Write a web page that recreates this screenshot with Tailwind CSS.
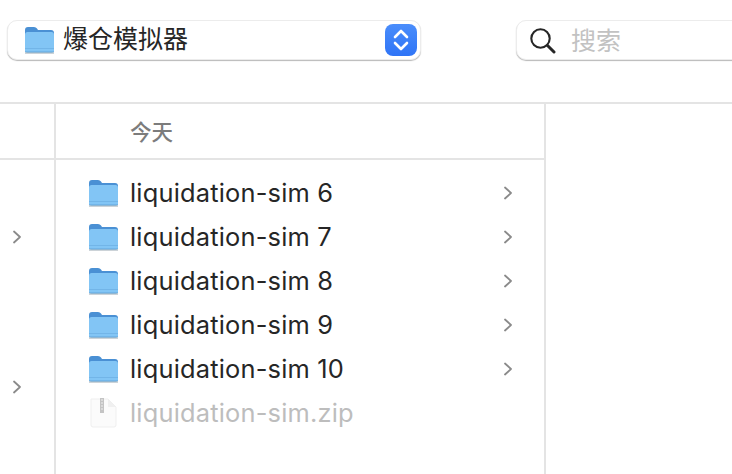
<!DOCTYPE html>
<html lang="zh">

<head>
  <meta charset="UTF-8" />
  <title>爆仓模拟器</title>
  <script src="https://cdn.jsdelivr.net/npm/@tailwindcss/browser@4"></script>
</head>

<body class="bg-white">
  <div class="w-[732px] h-[474px] overflow-hidden bg-white font-['Inter','Noto_Sans_CJK_SC',sans-serif]">
    <!-- Toolbar -->
    <div class="h-[102px] pt-[20px] pl-[7px] flex items-start">
      <div class="w-[414px] shrink-0 h-[40px] rounded-[10px] bg-white border border-[#ececec] shadow-[0_1px_1px_rgba(0,0,0,0.28)] flex items-center pl-[16px] pr-[3px]">
        <svg width="31" height="30" viewBox="0 0 31 30" class="shrink-0"><path d="M1 5 Q1 2 4 2 H10 Q12 2 13 3.5 L14 5 H27 Q30 5 30 8 V12 H1 Z" fill="#4a90d4" /><rect x="1" y="7" width="29" height="21" rx="2.5" fill="#82c5f5" /><rect x="1" y="23" width="29" height="1" fill="#72b5e8" /><rect x="1" y="26" width="29" height="1" fill="#72b5e8" /><rect x="1" y="27.5" width="29" height="1" fill="#9aa7b2" /></svg>
        <span class="ml-[8px] text-[25px] leading-none text-[#262626] -mt-[1px]">爆仓模拟器</span>
        <div class="ml-auto w-[32px] h-[32px] rounded-[8px] bg-gradient-to-b from-[#4a8dfb] to-[#2f74f6] flex items-center justify-center">
          <svg width="18" height="26" viewBox="0 0 18 26" fill="none" stroke="#fff" stroke-width="2.6" stroke-linecap="round" stroke-linejoin="round">
            <path d="M3 10 L9 4 L15 10" />
            <path d="M3 16 L9 22 L15 16" />
          </svg>
        </div>
      </div>
      <div class="ml-[95px] w-[300px] shrink-0 h-[40px] rounded-[10px] bg-white border border-[#ececec] shadow-[0_1px_1px_rgba(0,0,0,0.28)] flex items-center pl-[12px]">
        <svg width="27" height="27" viewBox="0 0 27 27" fill="none" stroke="#262626" class="shrink-0">
          <circle cx="11.5" cy="11.5" r="9.2" stroke-width="2.1" />
          <path d="M18.5 18.5 L25 25" stroke-width="3" stroke-linecap="round" />
        </svg>
        <span class="ml-[15px] pt-[2px] text-[25px] leading-none text-[#c2c2c2]">搜索</span>
      </div>
    </div>

    <!-- Columns -->
    <div class="flex h-[372px] border-t-2 border-[#e4e4e4]">
      <div class="w-[56px] shrink-0 border-r-2 border-[#e4e4e4] relative">
        <div class="h-[56px] border-b-2 border-[#e4e4e4]"></div>
        <svg width="10" height="14" viewBox="0 0 10 14" fill="none" stroke="#8a8a8a" stroke-width="1.8" stroke-linecap="round" stroke-linejoin="round" class="absolute left-[12px] top-[126px]"><path d="M2 1.5 L8 7 L2 12.5" /></svg>
        <svg width="10" height="14" viewBox="0 0 10 14" fill="none" stroke="#8a8a8a" stroke-width="1.8" stroke-linecap="round" stroke-linejoin="round" class="absolute left-[12px] top-[276px]"><path d="M2 1.5 L8 7 L2 12.5" /></svg>
      </div>
      <div class="w-[490px] shrink-0 border-r-2 border-[#e4e4e4]">
        <div class="h-[56px] border-b-2 border-[#e4e4e4] flex items-center pl-[74px] pt-[3px] text-[21.5px] text-[#7c7c7c] font-medium">今天</div>
        <ul class="pt-[11px] text-[25.4px] tracking-[0.2px] leading-[44px] text-[#262626]">
          <li class="h-[44px] flex items-center pl-[32px] pr-[31px]">
            <svg width="31" height="30" viewBox="0 0 31 30" class="shrink-0"><path d="M1 5 Q1 2 4 2 H10 Q12 2 13 3.5 L14 5 H27 Q30 5 30 8 V12 H1 Z" fill="#4a90d4" /><rect x="1" y="7" width="29" height="21" rx="2.5" fill="#82c5f5" /><rect x="1" y="23" width="29" height="1" fill="#72b5e8" /><rect x="1" y="26" width="29" height="1" fill="#72b5e8" /><rect x="1" y="27.5" width="29" height="1" fill="#9aa7b2" /></svg>
            <span class="ml-[11px]">liquidation-sim 6</span>
            <svg width="10" height="14" viewBox="0 0 10 14" fill="none" stroke="#8a8a8a" stroke-width="1.8" stroke-linecap="round" stroke-linejoin="round" class="ml-auto"><path d="M2 1.5 L8 7 L2 12.5" /></svg>
          </li>
          <li class="h-[44px] flex items-center pl-[32px] pr-[31px]">
            <svg width="31" height="30" viewBox="0 0 31 30" class="shrink-0"><path d="M1 5 Q1 2 4 2 H10 Q12 2 13 3.5 L14 5 H27 Q30 5 30 8 V12 H1 Z" fill="#4a90d4" /><rect x="1" y="7" width="29" height="21" rx="2.5" fill="#82c5f5" /><rect x="1" y="23" width="29" height="1" fill="#72b5e8" /><rect x="1" y="26" width="29" height="1" fill="#72b5e8" /><rect x="1" y="27.5" width="29" height="1" fill="#9aa7b2" /></svg>
            <span class="ml-[11px]">liquidation-sim 7</span>
            <svg width="10" height="14" viewBox="0 0 10 14" fill="none" stroke="#8a8a8a" stroke-width="1.8" stroke-linecap="round" stroke-linejoin="round" class="ml-auto"><path d="M2 1.5 L8 7 L2 12.5" /></svg>
          </li>
          <li class="h-[44px] flex items-center pl-[32px] pr-[31px]">
            <svg width="31" height="30" viewBox="0 0 31 30" class="shrink-0"><path d="M1 5 Q1 2 4 2 H10 Q12 2 13 3.5 L14 5 H27 Q30 5 30 8 V12 H1 Z" fill="#4a90d4" /><rect x="1" y="7" width="29" height="21" rx="2.5" fill="#82c5f5" /><rect x="1" y="23" width="29" height="1" fill="#72b5e8" /><rect x="1" y="26" width="29" height="1" fill="#72b5e8" /><rect x="1" y="27.5" width="29" height="1" fill="#9aa7b2" /></svg>
            <span class="ml-[11px]">liquidation-sim 8</span>
            <svg width="10" height="14" viewBox="0 0 10 14" fill="none" stroke="#8a8a8a" stroke-width="1.8" stroke-linecap="round" stroke-linejoin="round" class="ml-auto"><path d="M2 1.5 L8 7 L2 12.5" /></svg>
          </li>
          <li class="h-[44px] flex items-center pl-[32px] pr-[31px]">
            <svg width="31" height="30" viewBox="0 0 31 30" class="shrink-0"><path d="M1 5 Q1 2 4 2 H10 Q12 2 13 3.5 L14 5 H27 Q30 5 30 8 V12 H1 Z" fill="#4a90d4" /><rect x="1" y="7" width="29" height="21" rx="2.5" fill="#82c5f5" /><rect x="1" y="23" width="29" height="1" fill="#72b5e8" /><rect x="1" y="26" width="29" height="1" fill="#72b5e8" /><rect x="1" y="27.5" width="29" height="1" fill="#9aa7b2" /></svg>
            <span class="ml-[11px]">liquidation-sim 9</span>
            <svg width="10" height="14" viewBox="0 0 10 14" fill="none" stroke="#8a8a8a" stroke-width="1.8" stroke-linecap="round" stroke-linejoin="round" class="ml-auto"><path d="M2 1.5 L8 7 L2 12.5" /></svg>
          </li>
          <li class="h-[44px] flex items-center pl-[32px] pr-[31px]">
            <svg width="31" height="30" viewBox="0 0 31 30" class="shrink-0"><path d="M1 5 Q1 2 4 2 H10 Q12 2 13 3.5 L14 5 H27 Q30 5 30 8 V12 H1 Z" fill="#4a90d4" /><rect x="1" y="7" width="29" height="21" rx="2.5" fill="#82c5f5" /><rect x="1" y="23" width="29" height="1" fill="#72b5e8" /><rect x="1" y="26" width="29" height="1" fill="#72b5e8" /><rect x="1" y="27.5" width="29" height="1" fill="#9aa7b2" /></svg>
            <span class="ml-[11px]">liquidation-sim 10</span>
            <svg width="10" height="14" viewBox="0 0 10 14" fill="none" stroke="#8a8a8a" stroke-width="1.8" stroke-linecap="round" stroke-linejoin="round" class="ml-auto"><path d="M2 1.5 L8 7 L2 12.5" /></svg>
          </li>
          <li class="h-[44px] flex items-center pl-[32px] pr-[31px]">
            <svg width="31" height="30" viewBox="0 0 31 30" class="shrink-0">
              <path d="M3 1 H20 L28 9 V27 Q28 29 26 29 H5 Q3 29 3 27 Z" fill="#fbfbfb" stroke="#efefef" />
              <path d="M20 1 V9 H28 Z" fill="#f0f0f0" />
              <rect x="12" y="0" width="4" height="15" fill="#c4c4c4" />
              <path d="M13 2 H15 M13 5 H15 M13 8 H15 M13 11 H15" stroke="#eeeeee" stroke-width="1" />
            </svg>
            <span class="ml-[11px] text-[#bdbdbd]">liquidation-sim.zip</span>
          </li>
        </ul>
      </div>
    </div>
  </div>
</body>

</html>
